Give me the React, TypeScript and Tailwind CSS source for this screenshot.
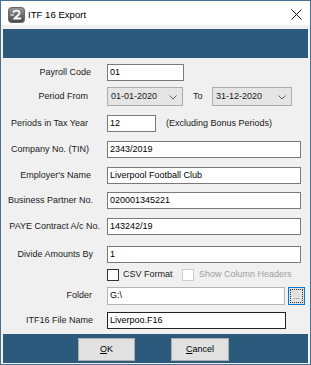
import React from 'react';

const font = { fontFamily: '"Liberation Sans", Arial, sans-serif' };

function Row({ label, pr, mt, h = 17, children }: { label: string; pr: number; mt: number; h?: number; children?: React.ReactNode }) {
  return (
    <div className="flex items-center" style={{ marginTop: mt, height: h }}>
      <div className="w-[104px] shrink-0 text-right whitespace-nowrap" style={{ paddingRight: pr }}>{label}</div>
      {children}
    </div>
  );
}

function TextBox({ value, w, border = 'border-[#7a7a7a]' }: { value: string; w: string; border?: string }) {
  return (
    <div className={`${w} h-full bg-white border ${border} flex items-center pl-[2px] text-black`}>{value}</div>
  );
}

function Combo({ value, w }: { value: string; w: string }) {
  return (
    <div className={`${w} h-[19px] bg-[#e5e5e5] border border-[#acacac] flex items-center justify-between pl-[3px] pr-[5px]`}>
      <span>{value}</span>
      <svg width="8" height="5" viewBox="0 0 8 5" className="mt-[1px]">
        <path d="M0.5 0.5 L4 4 L7.5 0.5" fill="none" stroke="#606060" strokeWidth="1" />
      </svg>
    </div>
  );
}

export default function App() {
  return (
    <div className="w-[311px] h-[365px] border border-[#4a7090] bg-[#f0f0f0] flex flex-col overflow-hidden text-[9px] text-[#1a1a1a]" style={font}>
      {/* title bar */}
      <div className="h-[24px] bg-white flex items-center shrink-0 relative">
        <svg width="17" height="16" viewBox="0 0 17 16" className="ml-[7px] mt-[4px]">
          <defs>
            <linearGradient id="ig" x1="0" y1="0" x2="0" y2="1">
              <stop offset="0" stopColor="#9a9a9a" />
              <stop offset="1" stopColor="#444" />
            </linearGradient>
          </defs>
          <rect x="0.5" y="0.5" width="16" height="15" rx="3" fill="url(#ig)" stroke="#666" />
          <path d="M5.5 5 C6.5 3 11 3 11.5 5.5 C12 8 8.5 9 6.5 11.5 L12.5 11.5" fill="none" stroke="#fff" strokeWidth="1.8" strokeLinecap="round" />
          <path d="M2.5 8 L6 8" stroke="#e0e0e0" strokeWidth="1.4" />
        </svg>
        <span className="ml-[3px] mt-[4px] text-[9.6px] text-black">ITF 16 Export</span>
        <svg width="11" height="11" viewBox="0 0 11 11" className="absolute left-[290px] top-[8px]">
          <path d="M0.5 0.5 L10.5 10.5 M10.5 0.5 L0.5 10.5" stroke="#111" strokeWidth="1" />
        </svg>
      </div>

      <div className="flex-1 px-[2px] pt-[4px] pb-[1px] flex flex-col">
        <div className="h-[29px] bg-[#2b5a7c] shrink-0" />

        <div className="flex-1 flex flex-col">
          <Row label="Payroll Code" pr={16} mt={6}>
            <TextBox value="01" w="w-[77px]" />
          </Row>
          <Row label="Period From" pr={19} mt={6} h={19}>
            <Combo value="01-01-2020" w="w-[76px]" />
            <span className="ml-[10px] w-[19px]">To</span>
            <Combo value="31-12-2020" w="w-[80px]" />
          </Row>
          <Row label="Periods in Tax Year" pr={19} mt={9}>
            <TextBox value="12" w="w-[49px]" />
            <span className="ml-[10px] whitespace-nowrap">(Excluding Bonus Periods)</span>
          </Row>
          <Row label="Company No. (TIN)" pr={18} mt={9}>
            <TextBox value="2343/2019" w="w-[194px]" />
          </Row>
          <Row label="Employer's Name" pr={16} mt={9}>
            <TextBox value="Liverpool Football Club" w="w-[194px]" />
          </Row>
          <Row label="Business Partner No." pr={14} mt={8}>
            <TextBox value="020001345221" w="w-[194px]" />
          </Row>
          <Row label="PAYE Contract A/c No." pr={7} mt={9}>
            <TextBox value="143242/19" w="w-[194px]" />
          </Row>
          <Row label="Divide Amounts By" pr={14} mt={11}>
            <TextBox value="1" w="w-[194px]" />
          </Row>
          <div className="flex items-center h-[13px] mt-[5px] pl-[104px]">
            <div className="w-[12px] h-[12px] bg-white border border-[#333]" />
            <span className="ml-[4px] w-[59px]">CSV Format</span>
            <div className="w-[12px] h-[12px] bg-white border border-[#cccccc]" />
            <span className="ml-[5px] text-[#a0a0a0] whitespace-nowrap">Show Column Headers</span>
          </div>
          <Row label="Folder" pr={15} mt={6} h={18}>
            <TextBox value="G:\" w="w-[178px]" border="border-[#b4b4b4]" />
            <div className="ml-[3px] w-[17px] h-[18px] border border-[#0078d7] bg-[#e1e1e1] p-[1px]">
              <div className="w-full h-full border border-dotted border-[#333] flex items-end justify-center leading-none text-[8px] text-[#555] pb-[1px]">...</div>
            </div>
          </Row>
          <Row label="ITF16 File Name" pr={14} mt={7}>
            <TextBox value="Liverpoo.F16" w="w-[179px]" border="border-[#222]" />
          </Row>
        </div>

        <div className="h-[29px] bg-[#2b5a7c] shrink-0 flex items-start pt-[4px] pl-[75px] gap-[36px]">
          <div className="w-[57px] h-[23px] bg-[#e1e1e1] border border-[#adadad] flex items-center justify-center text-black">
            <span><span className="underline">O</span>K</span>
          </div>
          <div className="w-[58px] h-[23px] bg-[#e1e1e1] border border-[#adadad] flex items-center justify-center text-black">
            <span><span className="underline">C</span>ancel</span>
          </div>
        </div>
      </div>
    </div>
  );
}
